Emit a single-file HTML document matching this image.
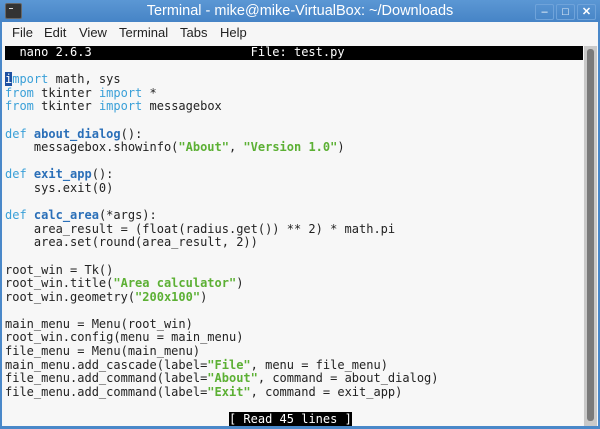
<!DOCTYPE html>
<html><head><style>
body{margin:0;width:600px;height:429px;overflow:hidden;background:#4a88c9;font-family:"Liberation Sans",sans-serif;position:relative}
.title{position:absolute;left:0;top:0;width:600px;height:22px;background:linear-gradient(#5b97d4,#4684c6);color:#fff;font-size:14.5px;text-align:center;line-height:22px}
.icon{position:absolute;left:5px;top:3px;width:15px;height:14px;background:#333;border:1px solid #666;border-radius:2px}
.icon:after{content:"";position:absolute;left:3px;top:4px;width:4px;height:1px;background:#ddd}
.btn{position:absolute;top:4px;width:17px;height:14px;border:1px solid #6fa3da;border-radius:2px;color:#fff;font-size:11px;line-height:14px;text-align:center}
.win{position:absolute;left:2px;top:22px;width:596px;height:404px;background:#f6f6f6}
.menu{position:absolute;left:0;top:0;height:22px;font-size:13px;line-height:22px;color:#222}
.menu span{position:absolute;white-space:nowrap}
.term{position:absolute;left:3px;top:24px;width:578px;height:380px;background:#f7f7f7;font-family:"DejaVu Sans Mono",monospace;font-size:12px;line-height:13.6px;white-space:pre;color:#222}
.hdr{background:#000;color:#fff;display:block}
.k{color:#3aa0d8}.f{color:#2a6fb8;font-weight:bold}.s{color:#5cb034;font-weight:bold}
.cur{background:#1e50a2;color:#fff}
.st{background:#000;color:#fff}
.sb{position:absolute;left:582px;top:24px;width:13px;height:380px;background:#c9c9c9}
.sb div{position:absolute;left:3px;top:3px;width:7px;height:372px;background:#7a7a7a;border-radius:3px}
</style></head><body>
<div class="title"><div class="icon"></div>Terminal - mike@mike-VirtualBox: ~/Downloads
<div class="btn" style="left:535px">–</div><div class="btn" style="left:556px">□</div><div class="btn" style="left:577px;font-weight:bold">✕</div></div>
<div class="win">
<div class="menu"><span style="left:10px">File</span><span style="left:42px">Edit</span><span style="left:77px">View</span><span style="left:117px">Terminal</span><span style="left:178px">Tabs</span><span style="left:218px">Help</span></div>
<div class="term"><span class="hdr">  nano 2.6.3                      File: test.py                                  </span>
<span class="cur">i</span><span class="k">mport</span> math, sys
<span class="k">from</span> tkinter <span class="k">import</span> *
<span class="k">from</span> tkinter <span class="k">import</span> messagebox

<span class="k">def</span> <span class="f">about_dialog</span>():
    messagebox.showinfo(<span class="s">"About"</span>, <span class="s">"Version 1.0"</span>)

<span class="k">def</span> <span class="f">exit_app</span>():
    sys.exit(0)

<span class="k">def</span> <span class="f">calc_area</span>(*args):
    area_result = (float(radius.get()) ** 2) * math.pi
    area.set(round(area_result, 2))

root_win = Tk()
root_win.title(<span class="s">"Area calculator"</span>)
root_win.geometry(<span class="s">"200x100"</span>)

main_menu = Menu(root_win)
root_win.config(menu = main_menu)
file_menu = Menu(main_menu)
main_menu.add_cascade(label=<span class="s">"File"</span>, menu = file_menu)
file_menu.add_command(label=<span class="s">"About"</span>, command = about_dialog)
file_menu.add_command(label=<span class="s">"Exit"</span>, command = exit_app)

                               <span class="st">[ Read 45 lines ]</span></div>
<div class="sb"><div></div></div>
</div>
</body></html>
